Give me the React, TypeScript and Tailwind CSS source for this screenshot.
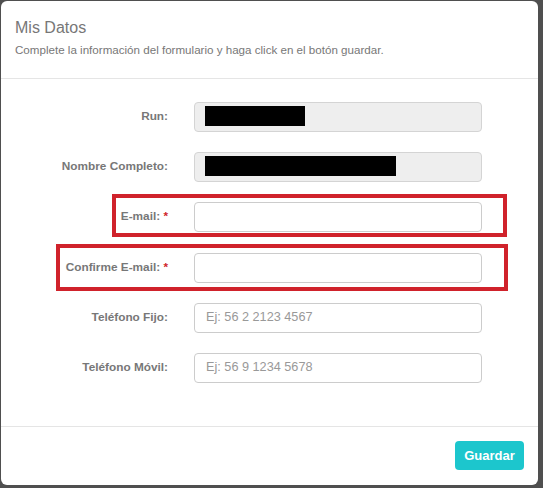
import React from "react";

const font = { fontFamily: '"Liberation Sans", Arial, sans-serif' };

function Row({
  label,
  required,
  children,
}: {
  label: string;
  required?: boolean;
  children: React.ReactNode;
}) {
  return (
    <div className="flex items-center h-[30px]">
      <div className="w-[153px] text-right text-[11.8px] font-bold text-[#777] leading-none">
        {label}
        {required && <span className="text-[#d0242b]"> *</span>}
      </div>
      <div className="ml-[26px] w-[288px] h-[30px]">{children}</div>
    </div>
  );
}

function TextInput({ placeholder }: { placeholder?: string }) {
  return (
    <div className="w-full h-full rounded-[4px] border border-[#ccc] bg-white flex items-center px-[11px] text-[12.7px] text-[#999]">
      {placeholder}
    </div>
  );
}

function ReadOnly({ redact }: { redact: number }) {
  return (
    <div className="w-full h-full rounded-[4px] border border-[#d4d4d4] bg-[#eeeeee] flex items-center pl-[10px]">
      <div className="h-[20px] -mt-[2px] bg-black" style={{ width: redact }} />
    </div>
  );
}

export default function App() {
  return (
    <div
      className="w-[543px] h-[488px] bg-[#4f4f4f] pt-[1px] pl-[1px] pr-[5px] pb-[3px]"
      style={font}
    >
      <div className="relative w-full h-full bg-white rounded-[6px] flex flex-col overflow-hidden">
        <div className="h-[78px] border-b border-[#e5e5e5] px-[14px] pt-[17px]">
          <div className="text-[16px] leading-[20px] text-[#777]">Mis Datos</div>
          <div className="mt-[5px] text-[11.6px] leading-[14px] text-[#777]">
            Complete la información del formulario y haga click en el botón guardar.
          </div>
        </div>
        <div className="relative flex-1 px-[14px] pt-[23px] flex flex-col gap-[20px]">
          <Row label="Run:">
            <ReadOnly redact={100} />
          </Row>
          <Row label="Nombre Completo:">
            <ReadOnly redact={191} />
          </Row>
          <Row label="E-mail:" required>
            <TextInput />
          </Row>
          <div className="mt-[1px]">
            <Row label="Confirme E-mail:" required>
              <TextInput />
            </Row>
          </div>
          <Row label="Teléfono Fijo:">
            <TextInput placeholder="Ej: 56 2 2123 4567" />
          </Row>
          <Row label="Teléfono Móvil:">
            <TextInput placeholder="Ej: 56 9 1234 5678" />
          </Row>
          <div className="absolute left-[111px] top-[115px] w-[395px] h-[43px] border-[4px] border-[#d0222b]" />
          <div className="absolute left-[55px] top-[165px] w-[452px] h-[47px] border-[4px] border-[#d0222b]" />
        </div>
        <div className="h-[59px] border-t border-[#e5e5e5] flex justify-end items-start pt-[14px] pr-[14px]">
          <div className="w-[69px] h-[29px] rounded-[4px] bg-[#1cc6cd] text-white text-[13px] font-bold flex items-center justify-center">
            Guardar
          </div>
        </div>
      </div>
    </div>
  );
}
